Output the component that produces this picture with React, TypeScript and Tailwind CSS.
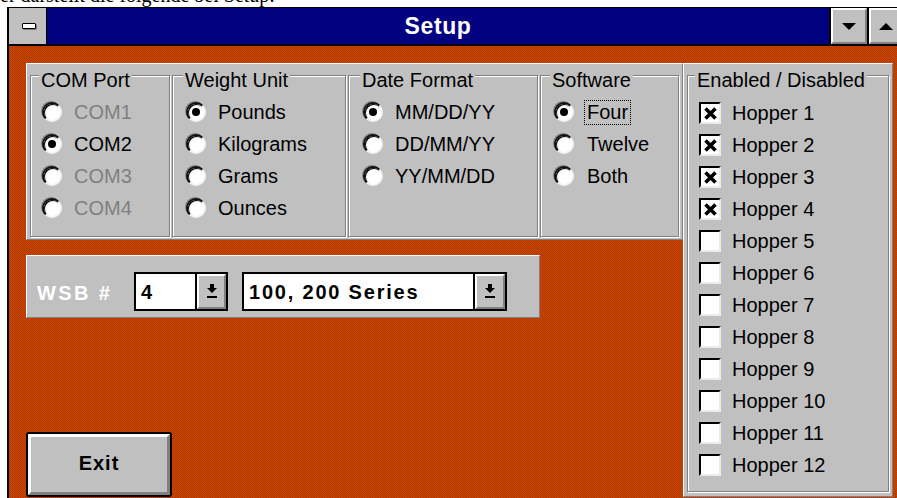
import React from 'react'

type Option = { label: string; checked?: boolean; disabled?: boolean; focused?: boolean }

const comPorts: Option[] = [
  { label: 'COM1', disabled: true },
  { label: 'COM2', checked: true },
  { label: 'COM3', disabled: true },
  { label: 'COM4', disabled: true },
]

const weightUnits: Option[] = [
  { label: 'Pounds', checked: true },
  { label: 'Kilograms' },
  { label: 'Grams' },
  { label: 'Ounces' },
]

const dateFormats: Option[] = [
  { label: 'MM/DD/YY', checked: true },
  { label: 'DD/MM/YY' },
  { label: 'YY/MM/DD' },
]

const softwareOptions: Option[] = [
  { label: 'Four', checked: true, focused: true },
  { label: 'Twelve' },
  { label: 'Both' },
]

const hoppers = Array.from({ length: 12 }, (_, i) => ({ label: `Hopper ${i + 1}`, checked: i < 4 }))

function Radio({ checked }: { checked?: boolean }) {
  return (
    <span className="flex h-[20px] w-[20px] shrink-0 items-center justify-center rounded-full border-2 border-t-[#101010] border-l-[#101010] border-r-[#f4f4f4] border-b-[#f4f4f4] bg-white shadow-[-1px_-1px_0_#808080,inset_1px_1px_0_#000]">
      {checked && <span className="h-[8px] w-[8px] rounded-full bg-black" />}
    </span>
  )
}

function RadioRow({ opt, gap }: { opt: Option; gap: string }) {
  return (
    <div className={`flex h-[32px] items-center ${gap}`}>
      <Radio checked={opt.checked} />
      <span
        className={`border px-[2px] text-[20px] leading-[23px] ${
          opt.focused ? 'border-dotted border-black' : 'border-transparent'
        } ${opt.disabled ? 'text-[#808080]' : 'text-black'}`}
      >
        {opt.label}
      </span>
    </div>
  )
}

function Checkbox({ checked }: { checked?: boolean }) {
  return (
    <span className="flex h-[22px] w-[22px] shrink-0 items-center justify-center border-2 border-t-black border-l-black border-r-[#ececec] border-b-[#ececec] bg-white">
      {checked && (
        <svg width="13" height="13" viewBox="0 0 13 13">
          <path d="M1.5 1.5 L11.5 11.5 M11.5 1.5 L1.5 11.5" stroke="#000" strokeWidth="3.6" />
        </svg>
      )}
    </span>
  )
}

// etched frame with its caption sitting on the top line
function GroupBox({
  title,
  className,
  labelPos,
  children,
}: {
  title: string
  className: string
  labelPos: string
  children: React.ReactNode
}) {
  return (
    <div
      className={`relative flex flex-col border border-[#808080] shadow-[inset_1px_1px_0_#fff,1px_1px_0_#fff] ${className}`}
    >
      <span className={`absolute top-[-7px] bg-[#c0c0c0] px-[2px] text-[20px] leading-[22px] text-black ${labelPos}`}>
        {title}
      </span>
      {children}
    </div>
  )
}

function DropArrow() {
  return (
    <svg width="10" height="15" viewBox="0 0 10 15">
      <rect x="3" y="0" width="4" height="4" fill="#000" />
      <path d="M0 4 H10 L5 9 Z" fill="#000" />
      <rect x="0" y="12" width="10" height="2" fill="#000" />
    </svg>
  )
}

function Combo({ value, width, btn }: { value: string; width: string; btn: string }) {
  return (
    <div className={`flex h-[39px] border-2 border-black bg-white ${width}`}>
      <div className="flex flex-1 items-center pl-[5px] text-[20px] font-bold tracking-[1.8px] text-black">{value}</div>
      <div className={`border-l-2 border-black ${btn}`}>
        <div className="flex h-full items-center justify-center border-2 border-t-white border-l-white border-r-[#808080] border-b-[#808080] bg-[#c0c0c0]">
          <DropArrow />
        </div>
      </div>
    </div>
  )
}

function CaptionButton({ up, width }: { up?: boolean; width: string }) {
  return (
    <div className={`shrink-0 border-l-2 border-black ${width}`}>
      <div className="flex h-full items-center justify-center border-2 border-t-white border-l-white border-r-[#808080] border-b-[#808080] bg-[#c0c0c0]">
        {up ? (
          <span className="h-0 w-0 border-x-[7px] border-b-[7px] border-x-transparent border-b-black" />
        ) : (
          <span className="h-0 w-0 border-x-[7px] border-t-[7px] border-x-transparent border-t-black" />
        )}
      </div>
    </div>
  )
}

export default function App() {
  return (
    <div className="flex h-[498px] w-[897px] flex-col overflow-hidden bg-white font-['Liberation_Sans',Arial,sans-serif]">
      {/* tail of the paragraph above the dialog */}
      <div className="h-[7px] shrink-0 overflow-hidden">
        <p className="-mt-[15px] whitespace-nowrap font-['Liberation_Serif',serif] text-[20px] leading-[20px] text-black">
          er darstellt die folgende bei Setup:
        </p>
      </div>

      <div className="ml-[7px] flex min-h-0 w-[896px] flex-1 flex-col border-l-2 border-t border-black">
        {/* caption bar */}
        <div className="flex h-[38px] shrink-0 border-b-2 border-black bg-[#000080]">
          <div className="flex w-[38px] shrink-0 items-center justify-center border-r border-black bg-[#c0c0c0]">
            <span className="ml-[2px] h-[6px] w-[14px] rounded-[1px] border border-black bg-white shadow-[1px_1px_0_#808080]" />
          </div>
          <div className="flex flex-1 items-center justify-center text-[23px] font-bold tracking-[0.6px] text-white">
            Setup
          </div>
          <CaptionButton width="w-[38px]" />
          <CaptionButton up width="w-[36px]" />
        </div>

        {/* client area */}
        <div className="flex min-h-0 flex-1 bg-[#c04000] bg-[image:repeating-conic-gradient(#b03800_0_25%,#cc4800_0_50%)] bg-[length:2px_2px] pb-[1px] pl-[17px] pt-[17px]">
          <div className="flex w-[657px] shrink-0 flex-col">
            <div className="flex h-[177px] gap-[2px] border border-t-white border-l-white border-r-[#808080] border-b-[#808080] bg-[#c0c0c0] px-[3px] pb-[2px] pt-[11px]">
              <GroupBox title="COM Port" className="w-[140px] pl-[11px] pt-[20px]" labelPos="left-[8px]">
                {comPorts.map((o) => (
                  <RadioRow key={o.label} opt={o} gap="gap-[9px]" />
                ))}
              </GroupBox>
              <GroupBox title="Weight Unit" className="w-[174px] pl-[13px] pt-[20px]" labelPos="left-[10px]">
                {weightUnits.map((o) => (
                  <RadioRow key={o.label} opt={o} gap="gap-[9px]" />
                ))}
              </GroupBox>
              <GroupBox title="Date Format" className="w-[190px] pl-[14px] pt-[20px]" labelPos="left-[11px]">
                {dateFormats.map((o) => (
                  <RadioRow key={o.label} opt={o} gap="gap-[9px]" />
                ))}
              </GroupBox>
              <GroupBox title="Software" className="w-[139px] pl-[13px] pt-[20px]" labelPos="left-[9px]">
                {softwareOptions.map((o) => (
                  <RadioRow key={o.label} opt={o} gap="gap-[10px]" />
                ))}
              </GroupBox>
            </div>

            <div className="mt-[15px] flex h-[63px] w-[514px] items-start border border-t-white border-l-white border-r-[#808080] border-b-[#808080] bg-[#c0c0c0] pl-[10px] pt-[16px]">
              <div className="flex h-[39px] w-[97px] items-center pt-[3px] text-[20px] font-bold tracking-[2.4px] text-white">
                WSB #
              </div>
              <Combo value="4" width="w-[94px]" btn="w-[31px]" />
              <div className="w-[14px]" />
              <Combo value="100, 200 Series" width="w-[265px]" btn="w-[32px]" />
            </div>

            <div className="mt-auto h-[65px] w-[146px] rounded-[3px] border-2 border-black">
              <div className="flex h-full items-center justify-center border-[3px] border-t-white border-l-white border-r-[#808080] border-b-[#808080] bg-[#c0c0c0] pb-[3px] text-[20px] font-bold tracking-[1px] text-black">
                Exit
              </div>
            </div>
          </div>

          {/* hopper enable list */}
          <div className="flex w-[210px] shrink-0 border border-t-white border-l-white border-r-[#808080] border-b-[#808080] bg-[#c0c0c0] px-[3px] pb-[4px] pt-[11px]">
            <GroupBox title="Enabled / Disabled" className="flex-1 pl-[11px] pt-[21px]" labelPos="left-[7px]">
              {hoppers.map((h) => (
                <div key={h.label} className="flex h-[32px] items-center gap-[11px]">
                  <Checkbox checked={h.checked} />
                  <span className="text-[20px] leading-[23px] text-black">{h.label}</span>
                </div>
              ))}
            </GroupBox>
          </div>
        </div>
      </div>
    </div>
  )
}
